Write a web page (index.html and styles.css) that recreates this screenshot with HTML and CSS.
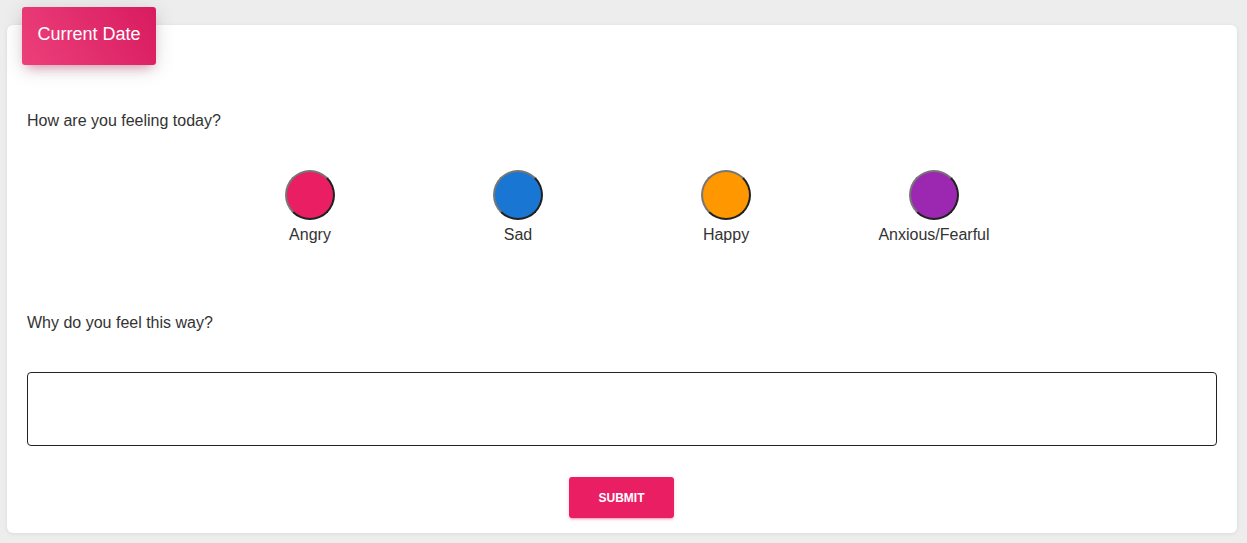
FILE: index.html
```html
<!DOCTYPE html>
<html>
<head>
<meta charset="utf-8">
<link rel="stylesheet" href="styles.css">
</head>
<body>
<div class="page">
  <div class="card">
    <div class="badge">Current Date</div>
    <p class="question">How are you feeling today?</p>
    <div class="moods">
      <div class="mood"><span class="dot angry"></span><span class="label">Angry</span></div>
      <div class="mood"><span class="dot sad"></span><span class="label">Sad</span></div>
      <div class="mood"><span class="dot happy"></span><span class="label">Happy</span></div>
      <div class="mood"><span class="dot anxious"></span><span class="label">Anxious/Fearful</span></div>
    </div>
    <p class="question why">Why do you feel this way?</p>
    <textarea class="reason"></textarea>
    <div class="actions"><button class="submit">SUBMIT</button></div>
  </div>
</div>
</body>
</html>
```

FILE: styles.css
```css
html, body {
  margin: 0;
  padding: 0;
  background: #ededed;
  font-family: "Liberation Sans", Arial, sans-serif;
  color: #333;
}
.page {
  padding: 25px 10px 10px 7px;
}
.card {
  background: #fff;
  border-radius: 6px;
  box-shadow: 0 1px 4px rgba(0,0,0,0.08);
  padding: 20px 20px 15px 20px;
}
.badge {
  display: block;
  width: fit-content;
  margin-top: -38px;
  margin-left: -5px;
  height: 58px;
  box-sizing: border-box;
  line-height: 54px;
  padding: 0 15.5px 4px 15.5px;
  font-size: 18px;
  color: #fff;
  border-radius: 3px;
  background: linear-gradient(60deg, #ec407a, #d81b60);
  box-shadow: 0 4px 20px 0 rgba(0,0,0,0.14), 0 7px 10px -5px rgba(233,30,99,0.4);
}
.question {
  margin: 47px 0 0 0;
  font-size: 16px;
  line-height: 18px;
}
.question.why {
  margin-top: 70px;
}
.moods {
  display: flex;
  justify-content: center;
  margin-top: 40px;
}
.mood {
  width: 208px;
  display: flex;
  flex-direction: column;
  align-items: center;
}
.dot {
  width: 50px;
  height: 50px;
  box-sizing: border-box;
  border-radius: 50%;
  border: 2px outset #767676;
}
.angry { background: #e91e63; }
.sad { background: #1976d2; }
.happy { background: #ff9800; }
.anxious { background: #9c27b0; }
.label {
  margin-top: 6px;
  font-size: 16px;
  line-height: 18px;
}
.reason {
  display: block;
  width: 100%;
  box-sizing: border-box;
  height: 74px;
  margin-top: 40px;
  border: 1px solid #222;
  border-radius: 4px;
  resize: none;
  font-family: inherit;
}
.actions {
  display: flex;
  justify-content: center;
  margin-top: 31px;
}
.submit {
  width: 105px;
  height: 41px;
  margin-left: -1px;
  border: none;
  border-radius: 3px;
  background: #e91e63;
  color: #fff;
  font-family: "Liberation Sans", Arial, sans-serif;
  font-weight: bold;
  font-size: 12px;
  box-shadow: 0 2px 2px 0 rgba(233,30,99,0.14), 0 3px 1px -2px rgba(233,30,99,0.2), 0 1px 5px 0 rgba(233,30,99,0.12);
}
```
